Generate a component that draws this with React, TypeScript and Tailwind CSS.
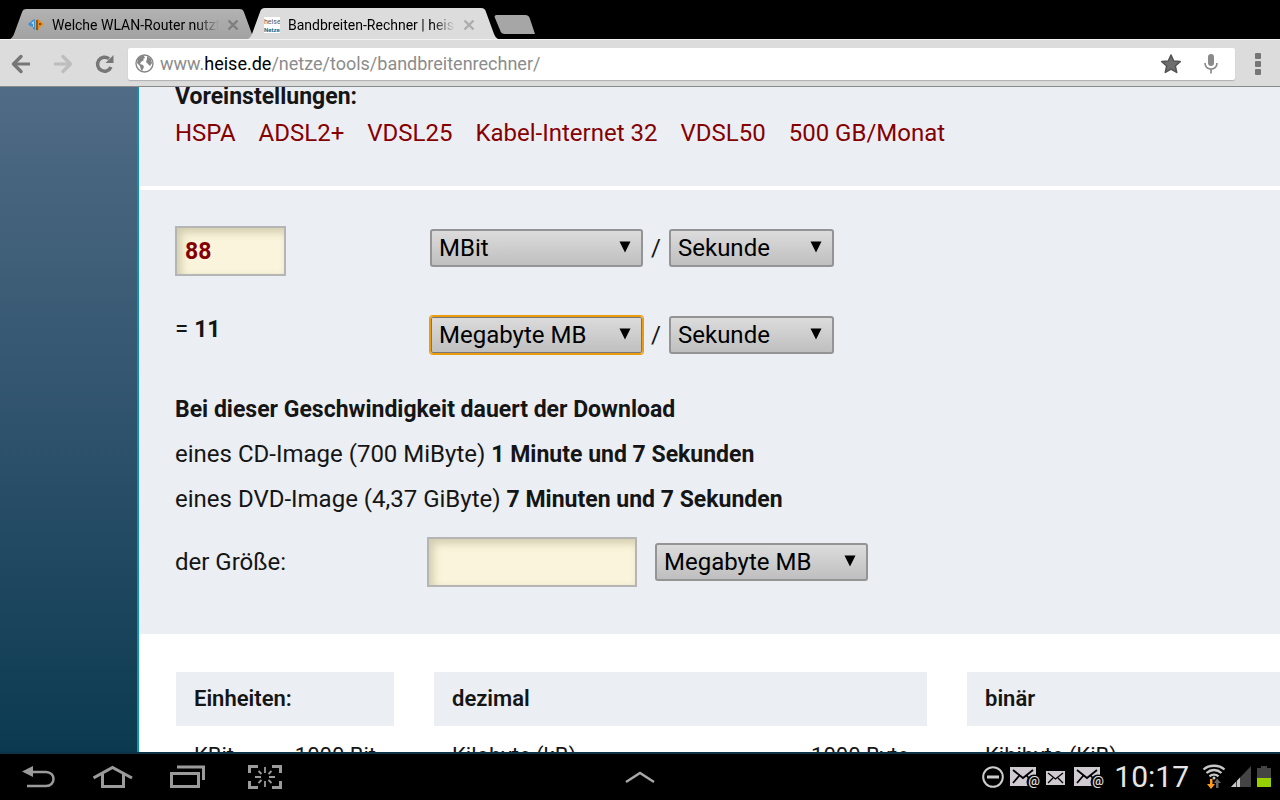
import { useState } from "react";
import type { FC, ReactNode } from "react";
import clsx from "clsx";

const PRESETS = ["HSPA", "ADSL2+", "VDSL25", "Kabel-Internet 32", "VDSL50", "500 GB/Monat"];

const UNITS = ["KBit", "MBit", "GBit", "Kilobyte kB", "Megabyte MB", "Gigabyte GB"];
const TIMES = ["Sekunde", "Minute", "Stunde", "Tag", "Monat"];

const UNIT_TABLES = [
  { title: "Einheiten:", width: "w-[218px]", rows: [["KBit", "1000 Bit"]] },
  { title: "dezimal", width: "w-[493px]", rows: [["Kilobyte (kB)", "1000 Byte"]] },
  { title: "binär", width: "w-[493px]", rows: [["Kibibyte (KiB)", "1024 Byte"]] },
];

// ---------- browser chrome ----------

const Tab: FC<{ title: string; icon: ReactNode; active?: boolean }> = ({ title, icon, active }) => (
  <div className={clsx("relative flex items-center", active ? "-ml-2 h-[31px] w-[250px] pt-0.5 pl-4" : "h-[30px] w-[246px] pt-0.5 pl-[18px]")}>
    <svg className="absolute inset-0 h-full w-full" viewBox="0 0 250 31" preserveAspectRatio="none" aria-hidden="true">
      <defs>
        <linearGradient id="tab-idle" x1="0" y1="0" x2="0" y2="1">
          <stop offset="0" stopColor="#b2b2b2" />
          <stop offset="1" stopColor="#a2a2a2" />
        </linearGradient>
      </defs>
      <path
        d="M0 31C2 30 3 28 4 26L12 4C13 1 14 0 17 0H233C236 0 237 1 238 4L246 26C247 28 248 30 250 31Z"
        fill={active ? "#dcdcdc" : "url(#tab-idle)"}
      />
    </svg>
    <button className="relative flex items-center">
      {icon}
      <span
        className={clsx(
          "ml-2 w-[167px] overflow-hidden whitespace-nowrap bg-clip-text text-left text-sm leading-5 text-transparent",
          active ? "bg-[linear-gradient(90deg,#000_86%,#dcdcdc_100%)]" : "bg-[linear-gradient(90deg,#000_86%,#aaa_100%)]"
        )}
      >
        {title}
      </span>
    </button>
    <button aria-label="Tab schließen" className={clsx("relative ml-2", active ? "text-[#adadad]" : "text-[#7e7e7e]")}>
      <svg width="12" height="12" viewBox="0 0 12 12" aria-hidden="true">
        <path d="M1.500 1.500L10.500 10.500M10.500 1.500L1.500 10.500" stroke="currentColor" strokeWidth="2.400" />
      </svg>
    </button>
  </div>
);

const RouterFavicon = () => (
  <svg className="h-4 w-4" viewBox="0 0 16 16" aria-hidden="true">
    <path d="M0 7L6 2L7 3V13L5 12V10L2 9Z" fill="#3f8fd0" />
    <path d="M3 6L6 4V10H5V7Z" fill="#a9d8f5" />
    <path d="M9 2H10L16 7L11 11L10 14H9Z" fill="#e58a1c" />
    <path d="M8 3H10V13H8Z" fill="#8a5a20" />
    <path d="M11 6H13V8H11Z" fill="#7a4a10" />
  </svg>
);

const HeiseFavicon = () => (
  <svg className="h-4 w-4" viewBox="0 0 16 16" aria-hidden="true">
    <rect width="16" height="16" fill="#fff" />
    <text x="0" y="7" fontSize="7" fill="#555">
      heise
    </text>
    <text x="0" y="15" fontSize="6" fontWeight="700" fill="#0a6c92">
      Netze
    </text>
  </svg>
);

const TabStrip = () => (
  <div className="flex h-[39px] shrink-0 items-end bg-black pl-[10px]">
    <Tab title="Welche WLAN-Router nutzt" icon={<RouterFavicon />} />
    <Tab title="Bandbreiten-Rechner | heise" icon={<HeiseFavicon />} active />
    <button aria-label="Neuer Tab" className="-ml-1 mb-[5px]">
      <svg width="41" height="19" viewBox="0 0 41 19" aria-hidden="true">
        <path d="M3 0H31C34 0 35 1 36 4L41 19H12C8 19 7 18 6 15L1 3C0 1 1 0 3 0Z" fill="#a6a6a6" />
      </svg>
    </button>
  </div>
);

const Toolbar = () => {
  const [url, setUrl] = useState("www.heise.de/netze/tools/bandbreitenrechner/");
  const [, sub, host, path] = url.match(/^(www\.)?([^/]*)(.*)$/) ?? [];

  return (
    <div className="flex h-12 shrink-0 items-center border-t border-b border-t-[#f2f2f2] border-b-[#8a8a8a] bg-[#dcdcdc] pt-px pl-[11px] text-[#767676]">
      <button aria-label="Zurück">
        <svg width="20" height="20" viewBox="0 0 20 20" fill="none" stroke="currentColor" strokeWidth="3" aria-hidden="true">
          <path d="M19 10H3" />
          <path d="M10 2.500L2.500 10L10 17.500" strokeWidth="3.400" strokeLinejoin="round" strokeLinecap="round" />
        </svg>
      </button>
      <button aria-label="Vorwärts" className="ml-[22px] text-[#bdbdbd]">
        <svg width="20" height="20" viewBox="0 0 20 20" fill="none" stroke="currentColor" strokeWidth="3" aria-hidden="true">
          <path d="M1 10H17" />
          <path d="M10 2.500L17.500 10L10 17.500" strokeWidth="3.400" strokeLinejoin="round" strokeLinecap="round" />
        </svg>
      </button>
      <button aria-label="Neu laden" className="ml-[22px]">
        <svg width="20" height="20" viewBox="0 0 20 20" aria-hidden="true">
          <path d="M16 13A7 7 0 1 1 14 4.800" fill="none" stroke="currentColor" strokeWidth="3.400" />
          <path d="M18.500 1V9H10.500Z" fill="currentColor" />
        </svg>
      </button>

      <div className="ml-[13px] flex h-8 min-w-0 flex-1 items-center rounded-xs bg-white pl-[7px] shadow-[0_1px_1px_rgba(0,0,0,0.2)]">
        <svg width="19" height="19" viewBox="0 0 19 19" aria-hidden="true">
          <circle cx="9.500" cy="9.500" r="8.500" fill="#fff" stroke="#858585" strokeWidth="1.400" />
          <path d="M3 4L6 2L9 2L10 4L8 5L9 6L6 8L5 10L8 11L9 13L7 17L6 16L5 12L2 9Z" fill="#858585" />
          <path d="M12 2L16 5L17 9L15 12L13 10L11 8L12 5Z" fill="#858585" />
        </svg>
        <div className="relative ml-[6px] min-w-0 flex-1 text-lg leading-8">
          <input
            type="text"
            aria-label="Adresse"
            value={url}
            onChange={(e) => setUrl(e.target.value)}
            className="block w-full bg-transparent text-transparent caret-black outline-none"
          />
          <span aria-hidden="true" className="pointer-events-none absolute inset-0 overflow-hidden whitespace-nowrap text-[#8c8c8c]">
            {sub}
            <span className="text-black">{host}</span>
            {path}
          </span>
        </div>
        <button aria-label="Lesezeichen">
          <svg width="22" height="22" viewBox="0 0 22 22" aria-hidden="true">
            <path
              d="M11 2L13.700 8L20.200 8.600L15.300 13L16.700 19.400L11 16.100L5.300 19.400L6.700 13L1.800 8.600L8.300 8Z"
              fill="#6e6e6e"
              stroke="#555"
              strokeWidth="1.600"
              strokeLinejoin="round"
            />
          </svg>
        </button>
        <button aria-label="Sprachsuche" className="mr-4 ml-[21px] text-[#8a8a8a]">
          <svg width="16" height="20" viewBox="0 0 16 20" aria-hidden="true">
            <rect x="5" y="0" width="6" height="12" rx="3" fill="currentColor" />
            <path d="M2 9C2 17 14 17 14 9M8 15V19.500" fill="none" stroke="currentColor" strokeWidth="1.700" />
          </svg>
        </button>
      </div>

      <button aria-label="Menü" className="mr-[18px] ml-5">
        <svg width="7" height="22" viewBox="0 0 7 22" fill="currentColor" aria-hidden="true">
          <rect width="6" height="6" rx="1" />
          <rect y="8" width="6" height="6" rx="1" />
          <rect y="16" width="6" height="6" rx="1" />
        </svg>
      </button>
    </div>
  );
};

// ---------- page ----------

type SelectProps = { label: string; options: string[]; initial: string; wide?: boolean; focused?: boolean };

const Select: FC<SelectProps> = ({ label, options, initial, wide, focused }) => (
  <div className={clsx("relative", wide ? "w-[213px]" : "w-[165px]")}>
    <select
      aria-label={label}
      defaultValue={initial}
      className={clsx(
        "block h-[38px] w-full appearance-none rounded-[3px] bg-gradient-to-b from-[#dcdcdc] to-[#bfbfbf] text-black outline-none",
        focused
          ? "border border-[#eb9b0b] pl-2 leading-9 shadow-[inset_0_0_0_1px_#777] ring-1 ring-[#eb9b0b]"
          : "border-2 border-[#949494] pl-[7px] leading-8"
      )}
    >
      {options.map((o) => (
        <option key={o}>{o}</option>
      ))}
    </select>
    <svg className="pointer-events-none absolute top-3 right-3" width="12" height="12" viewBox="0 0 12 12" aria-hidden="true">
      <path d="M0.500 0.500H11.500L6 11.500Z" />
    </svg>
  </div>
);

const boldText = "text-[23px] font-bold";

const fieldStyle =
  "h-[50px] border-2 border-[#b5b5b5] bg-[#faf4dc] px-2 text-[#850000] shadow-[inset_4px_4px_8px_rgba(110,110,60,0.3)] outline-none";

const Calculator = () => {
  const [amount, setAmount] = useState("88");
  const [size, setSize] = useState("");

  return (
    <section className="border-t-4 border-white bg-[#ebeef3] pt-9 pb-[47px] pl-9">
      <div className="grid grid-cols-[255px_1fr] items-start">
        <input
          type="text"
          aria-label="Bandbreite"
          value={amount}
          onChange={(e) => setAmount(e.target.value)}
          className={clsx(fieldStyle, boldText, "w-[111px]")}
        />
        <div className="flex items-center pt-[3px]">
          <Select label="Einheit" options={UNITS} initial="MBit" wide />
          <span className="w-[26px] text-center">/</span>
          <Select label="Zeitraum" options={TIMES} initial="Sekunde" />
        </div>
      </div>

      <div className="mt-[37px] grid grid-cols-[255px_1fr] items-start">
        <p className="leading-8">
          = <b className={boldText}>11</b>
        </p>
        <div className="flex items-center pt-[3px]">
          <Select label="Zieleinheit" options={UNITS} initial="Megabyte MB" wide focused />
          <span className="w-[26px] text-center">/</span>
          <Select label="Zielzeitraum" options={TIMES} initial="Sekunde" />
        </div>
      </div>

      <div className="mt-[33px] leading-[45px]">
        <h3 className={boldText}>Bei dieser Geschwindigkeit dauert der Download</h3>
        <p>
          eines CD-Image (700 MiByte) <b className={boldText}>1 Minute und 7 Sekunden</b>
        </p>
        <p>
          eines DVD-Image (4,37 GiByte) <b className={boldText}>7 Minuten und 7 Sekunden</b>
        </p>
      </div>

      <div className="mt-[15px] flex items-center">
        <label htmlFor="size" className="w-[252px]">
          der Größe:
        </label>
        <input
          id="size"
          type="text"
          value={size}
          onChange={(e) => setSize(e.target.value)}
          className={clsx(fieldStyle, boldText, "mr-[18px] w-[210px]")}
        />
        <Select label="Größeneinheit" options={UNITS} initial="Megabyte MB" wide />
      </div>
    </section>
  );
};

const UnitTables = () => (
  <section className="flex gap-10 bg-white pt-[38px] pl-[37px] text-[22px]">
    {UNIT_TABLES.map((t) => (
      <table key={t.title} className={clsx("shrink-0", t.width)}>
        <thead>
          <tr className="h-[54px] bg-[#ebeef3]">
            <th colSpan={2} className="px-[18px] text-left font-semibold">
              {t.title}
            </th>
          </tr>
        </thead>
        <tbody>
          {t.rows.map(([name, value]) => (
            <tr key={name} className="h-[60px]">
              <td className="pl-[18px]">{name}</td>
              <td className="pr-[18px] text-right">{value}</td>
            </tr>
          ))}
        </tbody>
      </table>
    ))}
  </section>
);

// ---------- system bar ----------

const Mail: FC<{ at?: boolean }> = ({ at }) => (
  <svg width="31" height="24" viewBox="0 0 31 24" aria-hidden="true">
    <rect y="2" width="26" height="19" fill="#d0cbd0" />
    <path d="M3 5L13 13L23 5M3 18L9 11M23 18L17 11" fill="none" stroke="#000" strokeWidth="1.800" />
    {at && (
      <>
        <circle cx="24" cy="17" r="7.500" fill="#000" />
        <text x="24" y="20" textAnchor="middle" fontSize="13" fontWeight="500" fill="#e0e0e0">
          @
        </text>
      </>
    )}
  </svg>
);

const SystemBar = () => (
  <footer className="grid h-[46px] shrink-0 grid-cols-[1fr_auto_1fr] items-center bg-black">
    <nav className="flex items-center pl-[22px] text-[#9b9b9b]">
      <button aria-label="Zurück">
        <svg width="34" height="24" viewBox="0 0 34 24" aria-hidden="true">
          <path d="M10 7H24C34 7 34 21 24 21H5" fill="none" stroke="currentColor" strokeWidth="2.500" />
          <path d="M0 6.500L11 1V12Z" fill="currentColor" />
        </svg>
      </button>
      <button aria-label="Startseite" className="ml-[37px]">
        <svg width="40" height="24" viewBox="0 0 40 24" fill="none" stroke="currentColor" strokeWidth="3" aria-hidden="true">
          <path d="M0.500 13L19.500 2.500L39 13" />
          <path d="M9.500 9V21.500H30.500V9" />
        </svg>
      </button>
      <button aria-label="Letzte Apps" className="ml-[37px]">
        <svg width="36" height="24" viewBox="0 0 36 24" fill="none" stroke="currentColor" strokeWidth="3" aria-hidden="true">
          <path d="M1.500 8.500H28.500V21.500H1.500Z" />
          <path d="M7 2H33.500V15" />
        </svg>
      </button>
      <button aria-label="Screenshot" className="ml-[42px]">
        <svg width="34" height="24" viewBox="0 0 34 24" fill="none" stroke="currentColor" aria-hidden="true">
          <path d="M1.500 8V1.500H10M24 1.500H32.500V8M32.500 16V22.500H24M10 22.500H1.500V16" strokeWidth="3" />
          <path d="M17 2V8M17 16V22M7 12H13M21 12H27M10.500 6L13.500 9M23.500 6L20.500 9M10.500 18L13.500 15M23.500 18L20.500 15" strokeWidth="1.800" />
        </svg>
      </button>
    </nav>

    <button aria-label="Mini-Apps">
      <svg width="30" height="14" viewBox="0 0 30 14" fill="none" aria-hidden="true">
        <path d="M1 12L15 3L29 12" stroke="#a8a8a8" strokeWidth="2.400" />
      </svg>
    </button>

    <div className="flex items-center justify-end pr-[9px]">
      <svg width="22" height="22" viewBox="0 0 22 22" fill="none" stroke="#ccc" strokeWidth="2" aria-hidden="true">
        <circle cx="11" cy="11" r="9.800" />
        <path d="M5 11H17" strokeWidth="3" />
      </svg>
      <div className="ml-1.5 flex items-center gap-[5px]">
        <Mail at />
        <svg width="19" height="16" viewBox="0 0 19 16" aria-hidden="true">
          <rect y="2" width="19" height="14" fill="#d0cbd0" />
          <path d="M2 4L9.500 10L17 4M2 14L7 9M17 14L12 9" fill="none" stroke="#000" strokeWidth="1.300" />
        </svg>
      </div>
      <div className="ml-[9px]">
        <Mail at />
      </div>
      <time className="ml-[9px] text-[30px] leading-9 text-[#e6e6e6]">10:17</time>
      <svg className="ml-[13px]" width="24" height="26" viewBox="0 0 24 26" fill="none" aria-hidden="true">
        <g stroke="#c8c8c8" strokeWidth="2.300">
          <path d="M1.500 5.500C7 0.500 17 0.500 22.500 5.500" />
          <path d="M4.500 9C9 5 15 5 19.500 9" />
          <path d="M7.500 12.300C10 10 14 10 16.500 12.300" />
        </g>
        <circle cx="12" cy="14" r="1.500" fill="#c8c8c8" />
        <path d="M8 15H10.500V20H13L9 25L5 20H8Z" fill="#ff9a1f" />
        <path d="M14 24H16.500V19H19L15 14.500L12 19H14Z" fill="#666" />
      </svg>
      <svg className="ml-[5px]" width="20" height="22" viewBox="0 0 20 22" aria-hidden="true">
        <path d="M0 21L20 0V21Z" fill="#444" />
        <path d="M0 21L5 15.750V21ZM6 14.700L9 11.550V21H6Z" fill="#c8c8c8" />
      </svg>
      <svg className="ml-1.5" width="14" height="22" viewBox="0 0 14 22" aria-hidden="true">
        <path d="M4 0H10V2H14V21H0V2H4Z" fill="#444" />
        <rect y="12" width="14" height="9" fill="#96d000" />
      </svg>
    </div>
  </footer>
);

export default function App() {
  return (
    <div className="flex h-screen flex-col overflow-hidden bg-black font-[Roboto,sans-serif]">
      <TabStrip />
      <Toolbar />
      <div className="flex min-h-0 flex-1 overflow-hidden border-b-2 border-[#0b3448] bg-[linear-gradient(#506b85,#30536d_50%,#0b3a50)]">
        <main className="ml-[137px] min-w-0 flex-1 overflow-hidden border-l-2 border-[#0c93b4] bg-white text-2xl text-[#151515]">
          <section className="bg-[#ebeef3] pb-[37px] pl-9">
            <h3 className="text-[23px] leading-5 font-bold">Voreinstellungen:</h3>
            <ul className="mt-2.5 flex gap-[23px] leading-8 whitespace-nowrap">
              {PRESETS.map((p) => (
                <li key={p}>
                  <a href="#" className="text-[#850000]">
                    {p}
                  </a>
                </li>
              ))}
            </ul>
          </section>
          <Calculator />
          <UnitTables />
        </main>
      </div>
      <SystemBar />
    </div>
  );
}
